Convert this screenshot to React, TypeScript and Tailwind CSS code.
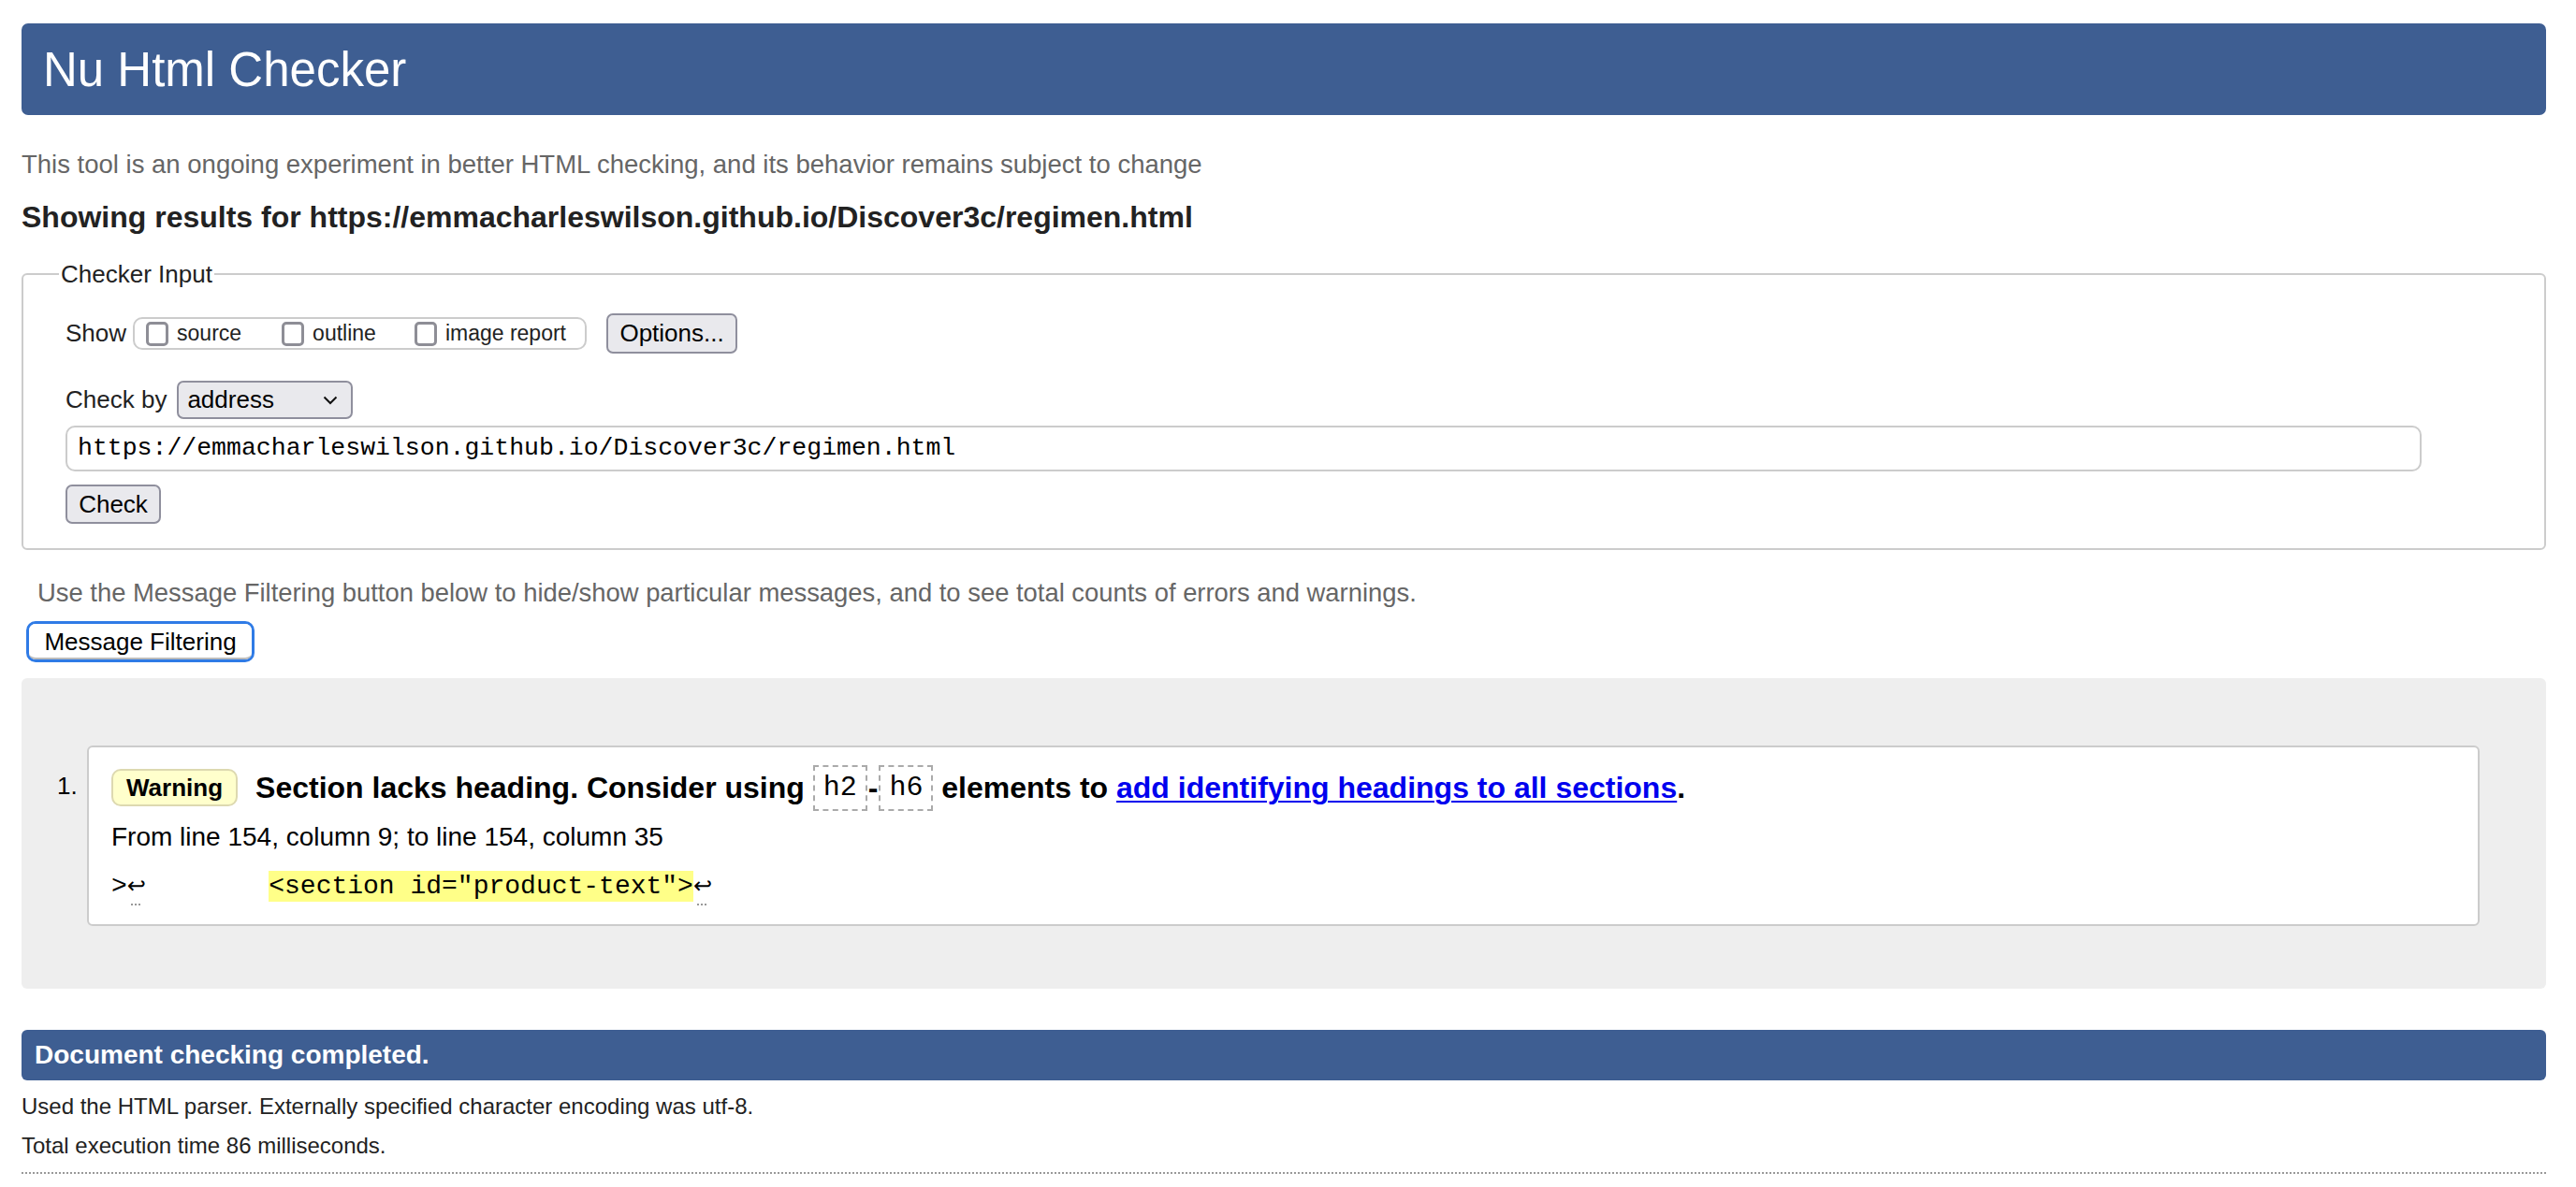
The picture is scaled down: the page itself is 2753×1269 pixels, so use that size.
export default function App() {
  return (
    <div className="min-h-screen bg-white pl-[23px] pr-[32px] pt-[25px] font-['Liberation_Sans',Arial,sans-serif] text-[#222]">
      <header className="flex h-[98px] items-center rounded-[7px] bg-[#3e5e92] pl-[23px]">
        <h1 className="text-[51px] leading-none text-white">Nu Html Checker</h1>
      </header>

      <p className="mt-[38px] text-[27.5px] leading-[30px] text-[#666]">
        This tool is an ongoing experiment in better HTML checking, and its behavior remains subject to change
      </p>
      <h2 className="mt-[23px] text-[32px] font-bold leading-[36px] text-[#222]">
        Showing results for https://emmacharleswilson.github.io/Discover3c/regimen.html
      </h2>

      <fieldset className="mt-[28px] rounded-[6px] border-2 border-[#ccc] px-[38px] pb-[26px] pt-[27px]">
        <legend className="px-[2px] text-[26px] leading-[30px] text-[#222]">Checker Input</legend>
        <div className="pl-[7px]">
          <div className="flex h-[43px] items-center">
            <span className="text-[26px]">Show</span>
            <div className="ml-[7px] flex h-[35px] w-[485px] items-center rounded-[10px] border-2 border-[#ccc] pl-[12px] text-[23px]">
              <label className="flex items-center">
                <span className="h-[26px] w-[24px] rounded-[5px] border-[3px] border-[#8e8e96] bg-white" />
                <span className="ml-[9px]">source</span>
              </label>
              <label className="ml-[43px] flex items-center">
                <span className="h-[26px] w-[24px] rounded-[5px] border-[3px] border-[#8e8e96] bg-white" />
                <span className="ml-[9px]">outline</span>
              </label>
              <label className="ml-[41px] flex items-center">
                <span className="h-[26px] w-[24px] rounded-[5px] border-[3px] border-[#8e8e96] bg-white" />
                <span className="ml-[9px]">image report</span>
              </label>
            </div>
            <button className="ml-[21px] h-[43px] w-[140px] rounded-[7px] border-2 border-[#8f8f9d] bg-[#e9e9ed] text-[26px] text-black">
              Options...
            </button>
          </div>

          <div className="mt-[29px] flex h-[41px] items-center">
            <span className="text-[26px]">Check by</span>
            <div className="ml-[11px] flex h-[41px] w-[188px] items-center justify-between rounded-[7px] border-2 border-[#8f8f9d] bg-[#e9e9ed] pl-[9px] pr-[14px] text-[26px] text-black">
              <span>address</span>
              <svg width="16" height="10" viewBox="0 0 16 10" fill="none" stroke="#111" strokeWidth="2">
                <path d="M1.5 1.5 L8 8 L14.5 1.5" />
              </svg>
            </div>
          </div>

          <div className="mt-[7px] flex h-[49px] w-[2518px] items-center rounded-[10px] border-2 border-[#ccc] bg-white pl-[11px] font-['Liberation_Mono',monospace] text-[26.5px] text-black">
            https://emmacharleswilson.github.io/Discover3c/regimen.html
          </div>

          <button className="mt-[14px] h-[42px] w-[102px] rounded-[7px] border-2 border-[#8f8f9d] bg-[#e9e9ed] text-[26px] text-black">
            Check
          </button>
        </div>
      </fieldset>

      <p className="mt-[31px] pl-[17px] text-[27.4px] leading-[30px] text-[#666]">
        Use the Message Filtering button below to hide/show particular messages, and to see total counts of errors and warnings.
      </p>
      <div className="ml-[5px] mt-[15px] inline-flex h-[44px] w-[244px] rounded-[10px] border-[3px] border-[#2f7be6] align-top">
        <button className="h-full w-full rounded-[7px] border-b-2 border-[#bbb] bg-white text-[26px] text-black">
          Message Filtering
        </button>
      </div>

      <div className="mt-[17px] h-[332px] rounded-[6px] bg-[#eee] pl-[38px] pr-[71px] pt-[72px]">
        <ol className="flex">
          <span className="w-[32px] pt-[28px] text-[26px] leading-[30px] text-black">1.</span>
          <li className="flex-1 rounded-[6px] border-2 border-[#ccc] bg-white pb-[24px] pl-[24px] pt-[23px] text-black">
            <div className="flex h-[40px] items-center">
              <span className="flex h-[40px] items-center rounded-[10px] border-2 border-[#ddd9b0] bg-[#ffffcc] px-[14px] text-[26px] font-bold">
                Warning
              </span>
              <p className="ml-[19px] flex items-center whitespace-pre text-[32px] font-bold">
                {'Section lacks heading. Consider using '}
                <code className="flex h-[49px] items-center border-2 border-dashed border-[#aaa] px-[9px] font-['Liberation_Mono',monospace] text-[30px] font-normal">h2</code>
                <span className="px-[1px]">-</span>
                <code className="flex h-[49px] items-center border-2 border-dashed border-[#aaa] px-[9px] font-['Liberation_Mono',monospace] text-[30px] font-normal">h6</code>
                {' elements to '}
                <a href="#" className="text-[#0000ee] underline decoration-2 underline-offset-[3px]">
                  add identifying headings to all sections
                </a>
                .
              </p>
            </div>
            <p className="mt-[18px] text-[28px] leading-[30px]">
              From line 154, column 9; to line 154, column 35
            </p>
            <p className="mt-[21px] flex h-[33px] items-center whitespace-pre font-['Liberation_Mono','DejaVu_Sans_Mono',monospace] text-[28px]">
              <span>&gt;</span>
              <span className="relative inline-block w-[17px] text-center font-['DejaVu_Sans',sans-serif] text-[24px] leading-[33px]">
                ↩
                <span className="absolute bottom-[-4px] left-[4px] w-[10px] border-b-2 border-dotted border-[#999]" />
              </span>
              <span>{'        '}</span>
              <span className="flex h-[33px] items-center bg-[#ffff88]">&lt;section id="product-text"&gt;</span>
              <span className="relative inline-block w-[17px] text-center font-['DejaVu_Sans',sans-serif] text-[24px] leading-[33px]">
                ↩
                <span className="absolute bottom-[-4px] left-[4px] w-[10px] border-b-2 border-dotted border-[#999]" />
              </span>
            </p>
          </li>
        </ol>
      </div>

      <div className="mt-[44px] flex h-[54px] items-center rounded-[6px] bg-[#3e5e92] pl-[14px]">
        <h2 className="text-[28px] font-bold text-white">Document checking completed.</h2>
      </div>
      <p className="mt-[14px] text-[24px] leading-[28px] text-[#222]">
        Used the HTML parser. Externally specified character encoding was utf-8.
      </p>
      <p className="mt-[14px] text-[24px] leading-[28px] text-[#222]">
        Total execution time 86 milliseconds.
      </p>
      <hr className="mt-[14px] border-0 border-t-2 border-dotted border-[#999]" />
    </div>
  );
}
